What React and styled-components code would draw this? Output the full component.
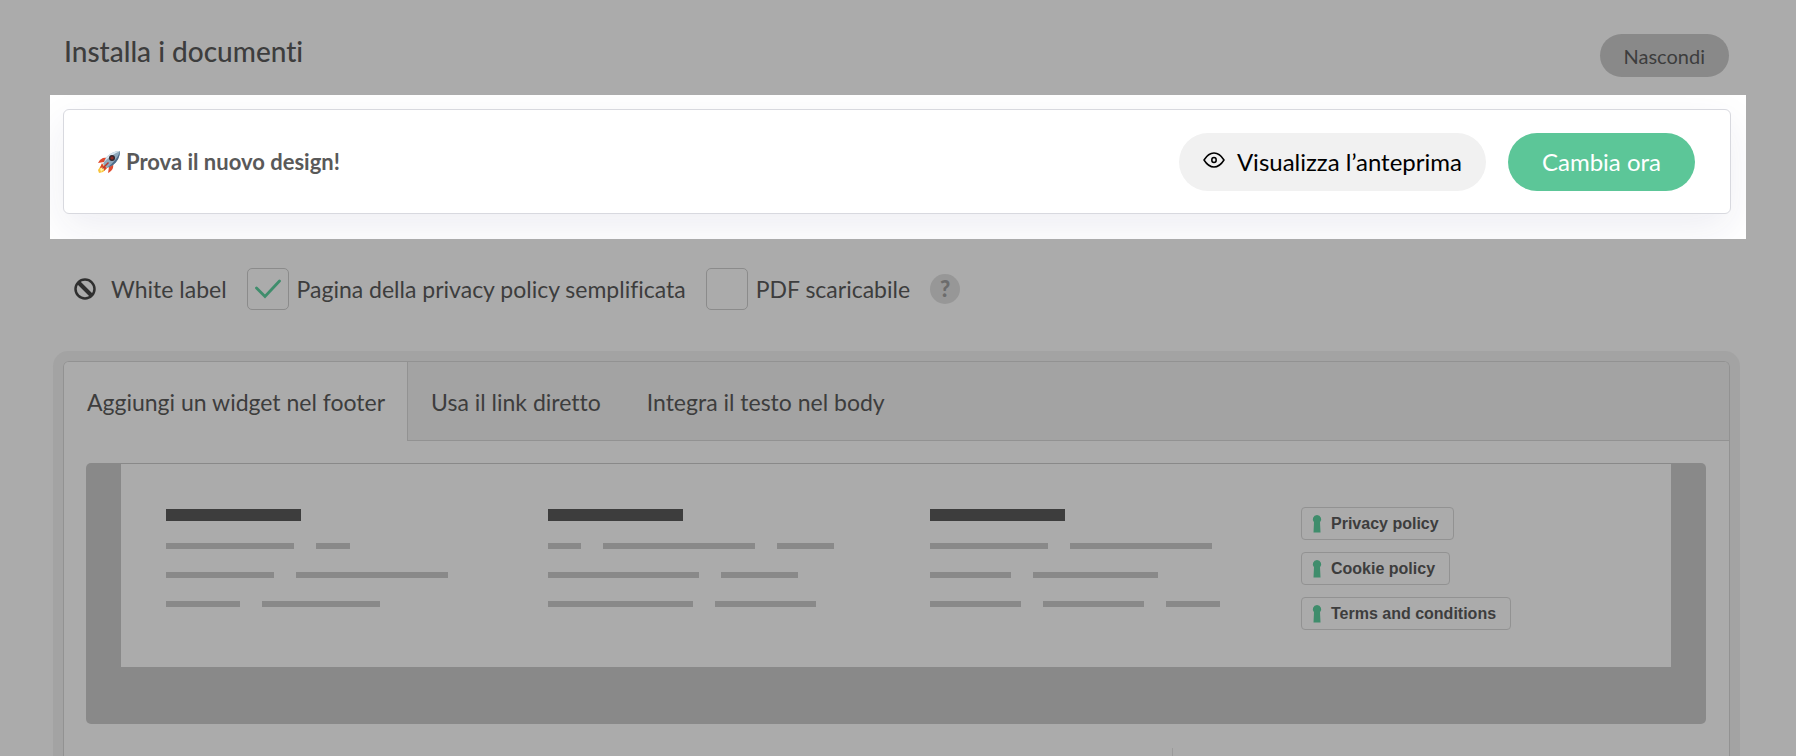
import React from 'react'
import styled, { createGlobalStyle } from 'styled-components'

const GlobalStyle = createGlobalStyle`
    * {
        box-sizing: border-box;
    }

    body {
        margin: 0;
        background-color: #ababab;
        color: #3d3d3d;
        font-family: "HK Grotesk", Lato, sans-serif;
        font-size: 23px;
        line-height: 28px;
        font-variant-ligatures: none;
    }

    button, input {
        font: inherit;
        font-variant-ligatures: none;
        margin: 0;
    }
`

const Page = styled.div`
    display: flex;
    flex-direction: column;
    min-height: 100vh;
    padding-top: 34px;
`

const Header = styled.header`
    display: flex;
    justify-content: space-between;
    align-items: flex-start;
    height: 61px;
    padding: 0 67px 0 64px;
`

const Title = styled.h2`
    margin: 0;
    font-size: 28px;
    line-height: 34px;
    font-weight: 500;
`

const HideButton = styled.button`
    height: 43px;
    padding: 0 24px;
    border: 0;
    border-radius: 22px;
    background-color: #898989;
    color: #3d3d3d;
    font-size: 20px;
`

const Spotlight = styled.section`
    margin: 0 50px;
    padding: 14px 15px 25px 13px;
    background-color: #fff;
    overflow: hidden;
`

const Banner = styled.div`
    display: flex;
    align-items: center;
    gap: 22px;
    height: 105px;
    padding: 0 35px 0 33px;
    border: 1px solid #d8d9df;
    border-radius: 6px;
    background-color: #fff;
    box-shadow: 0 14px 40px rgba(40, 40, 100, 0.08);
`

const BannerText = styled.p`
    display: flex;
    align-items: center;
    gap: 5px;
    margin: 0 auto 0 0;
    color: #595959;
    font-size: 22px;
    font-weight: 700;
`

const PillButton = styled.button`
    display: flex;
    align-items: center;
    gap: 12px;
    height: 58px;
    padding: 0 ${({ $primary }) => ($primary ? '34px' : '24px')};
    border: 0;
    border-radius: 29px;
    background-color: ${({ $primary }) => ($primary ? '#5cc698' : '#f1f1f1')};
    color: ${({ $primary }) => ($primary ? '#fff' : '#000')};
    font-size: 24px;
`

const Options = styled.div`
    display: flex;
    align-items: center;
    gap: 20px;
    margin-top: 29px;
    padding: 0 74px;
`

const Option = styled.label`
    display: flex;
    align-items: center;
    gap: ${({ $gap }) => $gap || '8px'};
`

const CheckBox = styled.span`
    display: grid;
    place-items: center;

    input, svg {
        grid-area: 1 / 1;
    }

    input {
        appearance: none;
        width: 42px;
        height: 42px;
        border: 1px solid #8b8b8b;
        border-radius: 5px;
    }

    svg {
        visibility: hidden;
        pointer-events: none;
    }

    input:checked + svg {
        visibility: visible;
    }
`

const HelpButton = styled.button`
    width: 30px;
    height: 30px;
    padding: 0;
    border: 0;
    border-radius: 50%;
    background-color: #979797;
    color: #6c6c6c;
    font-size: 22px;
    font-weight: 900;
`

const Panel = styled.section`
    display: flex;
    flex-direction: column;
    flex: 1;
    margin: 51px 66px 0 63px;
    border: 1px solid #929292;
    border-bottom: 0;
    border-radius: 6px 6px 0 0;
    box-shadow: 0 0 0 10px #a3a3a3;
`

const Tabs = styled.div`
    display: flex;
    height: 79px;
    border-radius: 5px 5px 0 0;
    background-color: #a3a3a3;
    box-shadow: inset 0 -1px #929292;
`

const Tab = styled.button`
    padding: 0 22px 0 23px;
    border: 0;
    border-right: 1px solid ${({ $active }) => ($active ? '#929292' : 'transparent')};
    border-radius: 5px 0 0 0;
    background-color: ${({ $active }) => ($active ? '#ababab' : 'transparent')};
    color: #3d3d3d;
`

const Preview = styled.div`
    margin: 22px 23px 24px 22px;
    padding: 1px 35px 57px;
    border-radius: 5px;
    background-color: #898989;
`

const FooterMock = styled.div`
    display: grid;
    grid-template-columns: 382fr 382fr 371fr 370fr;
    height: 203px;
    padding: 43px 0 0 45px;
    background-color: #ababab;
`

const Column = styled.div`
    display: flex;
    flex-direction: column;
    padding-top: 2px;
`

const Heading = styled.div`
    width: 135px;
    height: 12px;
    margin-bottom: 22px;
    background-color: #3d3d3d;
`

const Line = styled.div`
    display: flex;
    gap: 22px;
    margin-bottom: 23px;
`

const Word = styled.span`
    height: 6px;
    background-color: #898989;
`

const Links = styled.div`
    display: flex;
    flex-direction: column;
    align-items: flex-start;
    gap: 12px;
`

const PolicyLink = styled.a`
    display: flex;
    align-items: center;
    gap: 9px;
    height: 33px;
    padding: 0 14px 0 10px;
    border: 1px solid #929292;
    border-radius: 4px;
    color: #3d3d3d;
    font-family: "Liberation Sans", Arial, sans-serif;
    font-size: 16px;
    font-weight: 700;
    text-decoration: none;
`

const Split = styled.div`
    flex: 1;
    display: grid;
    grid-template-columns: 1109fr 557fr;
`

const SplitSide = styled.div`
    border-left: 1px solid #9b9b9b;
`

const RocketIcon = () => (
    <svg width="24" height="24" viewBox="0 0 24 24" aria-hidden="true">
        <path d="M5 14 1 20l1 3 4-1 5-5z" fill="#f9c43c" />
        <path d="M3 19l4-4 2 2-5 5z" fill="#fff1a1" />
        <path d="M10 8C6 7 3 9 1 13l6-1z" fill="#e04a2f" />
        <path d="M16 14c1 4-1 7-5 9l1-6z" fill="#e04a2f" />
        <path d="M5 13l2 4-4 1zM7 15l3 3-3 3z" fill="#d9432b" />
        <path d="M23 1c-6 0-11 3-14 7l-3 6 4 4 6-3c4-3 7-8 7-14z" fill="#8fa9bd" />
        <path d="M23 1c-6 0-11 3-14 7l-2 4C11 8 16 4 23 1z" fill="#d9e8f2" />
        <path d="M10 18l6-3c4-3 7-8 7-14-2 7-7 12-13 17z" fill="#4d6c89" />
        <circle cx="15" cy="8" r="3" fill="#34262c" />
        <circle cx="15" cy="8" r="1.6" fill="#8e2a25" />
        <path d="M11 12l1 1-6 6-1-1z" fill="#b8352a" />
    </svg>
)

const EyeIcon = () => (
    <svg width="22" height="20" viewBox="0 0 22 20" fill="none" stroke="currentColor" strokeWidth="1.5" aria-hidden="true">
        <path d="M1 8C4 3.200 7.300 1 11 1s7 2.200 10 7c-3 4.800-6.300 7-10 7s-7-2.200-10-7z" strokeLinejoin="round" />
        <ellipse cx="11" cy="8" rx="2.200" ry="2.500" />
    </svg>
)

const BanIcon = () => (
    <svg width="22" height="22" viewBox="0 0 22 22" fill="none" stroke="#2f2f2f" aria-hidden="true">
        <circle cx="11" cy="11" r="9.500" strokeWidth="2.500" />
        <path d="M4.500 4.500l13 13" strokeWidth="4" />
    </svg>
)

const CheckIcon = () => (
    <svg width="26" height="20" viewBox="0 0 26 20" fill="none" stroke="#3f8d6c" strokeWidth="2.800" aria-hidden="true">
        <path d="M1.500 9l8.500 8.500L24.500 2" strokeLinecap="round" />
    </svg>
)

const KeyholeIcon = () => (
    <svg width="10" height="18" viewBox="0 0 10 18" fill="#3f8d6c" aria-hidden="true">
        <path d="M5 0a4.300 4.300 0 0 1 3 7.300L8.500 17.500h-7L2 7.300A4.300 4.300 0 0 1 5 0z" />
    </svg>
)

const columns = [
    [[128, 34], [108, 152], [74, 118]],
    [[33, 152, 57], [151, 77], [145, 101]],
    [[118, 142], [81, 125], [91, 101, 54]],
]

const tabs = ['Aggiungi un widget nel footer', 'Usa il link diretto', 'Integra il testo nel body']

const policies = ['Privacy policy', 'Cookie policy', 'Terms and conditions']

const App = () => {
    return (
        <Page>
            <GlobalStyle />
            <Header>
                <Title>Installa i documenti</Title>
                <HideButton type="button">Nascondi</HideButton>
            </Header>
            <Spotlight>
                <Banner>
                    <BannerText>
                        <RocketIcon />
                        Prova il nuovo design!
                    </BannerText>
                    <PillButton type="button">
                        <EyeIcon />
                        Visualizza l’anteprima
                    </PillButton>
                    <PillButton type="button" $primary>Cambia ora</PillButton>
                </Banner>
            </Spotlight>
            <Options>
                <Option as="span" $gap="15px">
                    <BanIcon />
                    White label
                </Option>
                <Option>
                    <CheckBox>
                        <input type="checkbox" defaultChecked />
                        <CheckIcon />
                    </CheckBox>
                    Pagina della privacy policy semplificata
                </Option>
                <Option>
                    <CheckBox>
                        <input type="checkbox" />
                        <CheckIcon />
                    </CheckBox>
                    PDF scaricabile
                </Option>
                <HelpButton type="button">?</HelpButton>
            </Options>
            <Panel>
                <Tabs role="tablist">
                    {tabs.map((tab, i) => (
                        <Tab key={tab} type="button" role="tab" aria-selected={i === 0} $active={i === 0}>
                            {tab}
                        </Tab>
                    ))}
                </Tabs>
                <Preview>
                    <FooterMock>
                        {columns.map((lines, i) => (
                            <Column key={i}>
                                <Heading />
                                {lines.map((words, j) => (
                                    <Line key={j}>
                                        {words.map((width, k) => (
                                            <Word key={k} style={{ width }} />
                                        ))}
                                    </Line>
                                ))}
                            </Column>
                        ))}
                        <Links>
                            {policies.map((policy) => (
                                <PolicyLink key={policy} href="#">
                                    <KeyholeIcon />
                                    {policy}
                                </PolicyLink>
                            ))}
                        </Links>
                    </FooterMock>
                </Preview>
                <Split>
                    <div />
                    <SplitSide />
                </Split>
            </Panel>
        </Page>
    )
}

export default App
